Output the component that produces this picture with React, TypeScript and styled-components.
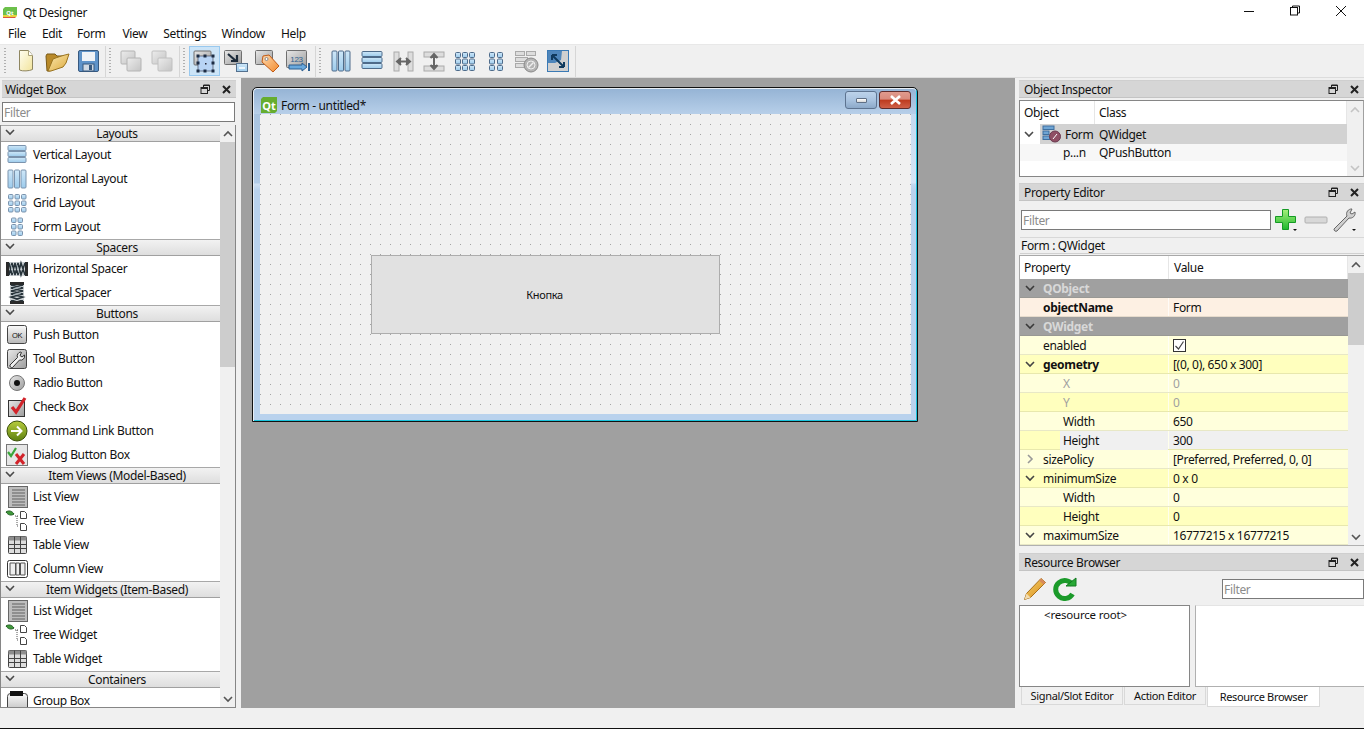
import React from "react";
import styled, { createGlobalStyle } from "styled-components";

const Global = createGlobalStyle`
  html, body { margin: 0; padding: 0; background: #f0f0f0; }
  body { font-family: "Noto Sans", "Liberation Sans", sans-serif; font-size: 12px; color: #111; overflow: hidden; letter-spacing: -0.33px; }
  * { box-sizing: border-box; }
`;

const Page = styled.div`width:1364px;height:729px;display:flex;flex-direction:column;background:#f0f0f0;overflow:hidden;`;
const TitleBar = styled.header`height:22px;background:#fff;display:flex;align-items:center;padding:3px 0 0 3px;`;
const AppName = styled.span`margin-left:6px;font-size:12px;line-height:18px;`;
const QtBadge = styled.span<{ $w: number; $h: number; $stripe?: boolean }>`
  width:${p => p.$w}px;height:${p => p.$h}px;display:flex;align-items:center;justify-content:center;flex:none;
  color:#fff;font-weight:700;font-size:${p => p.$h - 5}px;letter-spacing:0;line-height:1;
  background:${p => p.$stripe ? "linear-gradient(#6cc04a 0 72%, #e8d23c 72% 88%, #d9583c 88%)" : "#66ad2f"};
  clip-path:polygon(2px 0,100% 0,100% calc(100% - 2px),calc(100% - 2px) 100%,0 100%,0 2px);
`;
const WinControls = styled.div`margin:-3px 0 0 auto;align-self:flex-start;display:flex;`;
const WinControl = styled.span`width:46px;height:22px;display:flex;align-items:center;justify-content:center;`;
const MenuBar = styled.nav`height:22px;background:#fff;display:flex;align-items:center;padding-top:2px;`;
const MenuItem = styled.span<{ $x: number }>`margin-left:${p => p.$x}px;line-height:20px;`;
const ToolBar = styled.div`height:34px;background:#f0f0f0;border-top:1px solid #e8e8e8;border-bottom:1px solid #dcdcdc;display:flex;align-items:center;`;
const ToolGroup = styled.div<{ $first?: boolean }>`display:flex;align-items:center;height:31px;padding-right:2px;border-right:1px solid #d6d6d6;padding-left:${p => p.$first ? 4 : 3}px;`;
const Handle = styled.span`width:2px;height:27px;margin-right:4px;background-image:repeating-linear-gradient(#b0b0b0 0 1px,transparent 1px 3px);`;
const ToolButton = styled.span<{ $active?: boolean }>`
  width:31px;height:30px;display:flex;align-items:center;justify-content:center;flex:none;
  ${p => p.$active ? "background:#cce4f7;border:1px solid #99c9ef;" : ""}
`;
const Main = styled.main`height:630px;display:flex;`;
const LeftDock = styled.aside`width:238px;flex:none;display:flex;flex-direction:column;padding-top:2px;`;
const RightDock = styled.aside`width:346px;margin-left:3px;flex:none;display:flex;flex-direction:column;padding-top:2px;`;
const DockTitle = styled.div<{ $left?: boolean }>`
  height:18px;flex:none;background:#d6d6d6;border-top:1px solid #cfcfcf;border-bottom:1px solid #c4c4c4;
  display:flex;align-items:center;padding:2px 4px 0 ${p => p.$left ? 3 : 5}px;margin-left:${p => p.$left ? 2 : 1}px;margin-right:${p => p.$left ? 2 : 0}px;
`;
const DockName = styled.span`flex:1;line-height:14px;`;
const DockIcons = styled.span`display:flex;align-items:center;gap:10px;margin-top:-2px;`;
const Filter = styled.input<{ $w: number; $h: number; $ml: number }>`
  width:${p => p.$w}px;height:${p => p.$h}px;margin-left:${p => p.$ml}px;flex:none;
  border:1px solid #7a7a7a;background:#fff;padding:0 1px;font:inherit;letter-spacing:inherit;color:#111;outline:none;
  &::placeholder{color:#8c8c8c;opacity:1;}
`;
const BoxFilterRow = styled.div`margin-top:4px;height:20px;display:flex;flex:none;`;
const BoxPanel = styled.div`margin-top:3px;height:583px;width:236px;border:1px solid #868686;border-top:0;display:flex;overflow:hidden;`;
const BoxList = styled.div`width:219px;flex:none;background:#fff;overflow:hidden;`;
const BoxHeader = styled.div`
  position:relative;border-top:1px solid #a8a8a8;border-bottom:1px solid #a0a0a0;margin-bottom:1px;padding-left:13px;
  height:17px;background:linear-gradient(#f2f2f2,#dedede);display:flex;align-items:center;justify-content:center;
`;
const BoxHeaderArrow = styled.span`position:absolute;left:4px;top:1px;display:flex;`;
const BoxItem = styled.div`height:24px;display:flex;align-items:center;padding-left:4px;gap:5px;white-space:nowrap;`;
const BoxItemText = styled.span`line-height:12px;margin-left:-1px;`;
const BoxGroup = styled.div``;
const ScrollBar = styled.div`width:16px;flex:none;background:#f0f0f0;display:flex;flex-direction:column;align-items:stretch;`;
const ScrollEnd = styled.span`height:17px;flex:none;display:flex;align-items:center;justify-content:center;`;
const ScrollTrack = styled.span`flex:1;display:block;`;
const ScrollThumb = styled.span<{ $top: number; $h: number }>`display:block;margin-top:${p => p.$top}px;height:${p => p.$h}px;background:#cdcdcd;`;

const Center = styled.section`width:774px;margin-left:3px;flex:none;background:#a0a0a0;position:relative;`;
const FormWindow = styled.div`
  position:absolute;left:11px;top:9px;width:666px;height:335px;display:flex;flex-direction:column;
  border:1px solid #111;border-radius:5px 5px 0 0;
  box-shadow:inset 1px 1px 0 #e8eef5,inset -1px -1px 0 #19c3dc;
  background:linear-gradient(#a6c2df 0,#b1cbe7 95px,#cfe0f3 96px,#b9d2ed 102px) left/50% 100% no-repeat,linear-gradient(#bdd4ec 0,#d6e6f7 95px,#c3d9f0 96px,#b9d2ed 102px) right/50% 100% no-repeat;
  padding:1px 1px 7px 1px;
`;
const FormCaption = styled.div`height:25px;flex:none;display:flex;align-items:center;padding:7px 5px 0 7px;background:linear-gradient(#96b4d5,#b7cfe9);border-radius:4px 4px 0 0;`;
const CaptionText = styled.span`margin-left:4px;flex:1;`;
const CaptionBtn = styled.span<{ $close?: boolean }>`
  width:32px;height:18px;margin-left:2px;margin-top:-10px;display:flex;align-items:center;justify-content:center;border-radius:3px;
  border:1px solid ${p => p.$close ? "#5f2c2c" : "#5d7390"};
  background:${p => p.$close ? "linear-gradient(#e09a8d,#d98a7c 45%,#bd3a1e 50%,#cf6048)" : "linear-gradient(#bcd2ea,#a9c3e0 50%,#8ca9c9)"};
`;
const MinBar = styled.span`width:11px;height:5px;background:linear-gradient(#fff,#d8d8d8);border:1px solid #5f6f85;border-radius:1px;`;
const FormClient = styled.div`
  width:651px;height:300px;margin-left:6px;position:relative;background-color:#f0f0f0;
  background-image:conic-gradient(from 0deg at 1px 1px,transparent 0 75%,#a3a3a3 75% 100%);background-size:10px 10px;
`;
const FormButton = styled.div`position:absolute;left:111px;top:141px;width:349px;height:79px;background:#e1e1e1;border:1px solid #adadad;display:flex;align-items:center;justify-content:center;font-size:11px;padding-right:2px;`;

const Inspector = styled.div`margin-top:2px;margin-left:1px;height:77px;flex:none;border:1px solid #868686;border-right:1px solid #a0a0a0;background:#fff;display:flex;`;
const InspectorBody = styled.div`flex:1;min-width:0;`;
const ColHeads = styled.div<{ $h: number; $first: number }>`height:${p => p.$h}px;display:grid;grid-template-columns:${p => p.$first}px 1fr;background:#fff;`;
const ColHead = styled.div<{ $pad: number }>`padding-left:${p => p.$pad}px;border-right:1px solid #e6e6e6;display:flex;align-items:center;`;
const ObjRow = styled.div<{ $bg: string; $h: number }>`height:${p => p.$h}px;display:grid;grid-template-columns:75px 1fr;background:${p => p.$bg};align-items:center;`;
const ObjName = styled.div<{ $selected?: boolean }>`display:flex;align-items:center;height:100%;position:relative;padding-left:${p => p.$selected ? 4 : 43}px;`;
const ObjNameHi = styled.span`display:flex;align-items:center;gap:3px;padding-left:1px;`;
const ObjClass = styled.div`padding-left:4px;`;
const PropSection = styled.div`margin-top:6px;flex:none;`;
const PropFilterRow = styled.div`margin-top:7px;height:24px;display:flex;align-items:center;`;
const PropBtns = styled.div`display:flex;align-items:center;`;
const PropBtn = styled.span<{ $w: number }>`width:${p => p.$w}px;height:24px;display:flex;align-items:center;justify-content:center;`;
const ClassLine = styled.div`margin:5px 0 0 2px;height:17px;border-top:1px solid #d8d8d8;border-bottom:1px solid #d0d0d0;display:flex;align-items:center;padding-left:1px;`;
const PropPanel = styled.div`margin:1px 0 0 1px;height:291px;border:1px solid #a8a8a8;border-bottom:1px solid #b0b0b0;display:flex;background:#fff;`;
const PropBody = styled.div`width:328px;flex:none;overflow:hidden;`;
const PropRow = styled.div<{ $bg: string }>`height:19px;display:grid;grid-template-columns:149px 1fr;background:${p => p.$bg};border-bottom:1px solid rgba(110,110,90,.16);`;
const PropName = styled.div<{ $depth: number; $bold?: boolean; $muted?: boolean; $light?: boolean }>`
  position:relative;display:flex;align-items:center;white-space:nowrap;
  padding-left:${p => p.$depth === 0 ? 23 : 43}px;font-weight:${p => p.$bold ? 700 : 400};
  color:${p => p.$light ? "#d8d8d8" : p.$muted ? "#a0a0a0" : "#111"};
  ${p => p.$light ? "" : "border-right:1px solid rgba(255,255,255,.7);"}
`;
const HeightFill = styled.span`position:absolute;left:40px;top:0;bottom:-1px;right:0;background:#f0f0f0;`;
const PropLabel = styled.span`position:relative;`;
const PropArrow = styled.span`position:absolute;left:5px;top:4px;display:flex;`;
const PropValue = styled.div<{ $muted?: boolean; $fill?: string }>`padding-left:4px;display:flex;align-items:center;color:${p => p.$muted ? "#a0a0a0" : "#111"};white-space:nowrap;${p => p.$fill ? `background:${p.$fill};` : ""}`;
const Check = styled.span`width:13px;height:13px;border:1px solid #333;background:#fff;display:flex;align-items:center;justify-content:center;`;
const ResSection = styled.div`margin-top:7px;flex:1;display:flex;flex-direction:column;min-height:0;`;
const ResTools = styled.div`height:34px;display:flex;align-items:center;padding:2px 0 0 5px;flex:none;`;
const ResBtn = styled.span`width:24px;height:24px;margin-right:6px;display:flex;align-items:center;justify-content:center;`;
const ResSpace = styled.span`flex:1;`;
const ResTrees = styled.div`height:82px;display:flex;margin-left:1px;flex:none;`;
const ResTree = styled.div`width:171px;border:1px solid #868686;background:#fff;padding:1px 0 0 24px;font-size:11.5px;line-height:15px;letter-spacing:-0.2px;`;
const ResPane = styled.div`margin-left:5px;flex:1;border:1px solid #b0b0b0;border-right:0;border-top-color:#e4e4e4;background:#fff;`;
const Tabs = styled.div`display:flex;margin-left:3px;height:20px;flex:none;`;
const Tab = styled.span<{ $w: number; $active?: boolean }>`
  width:${p => p.$w}px;height:${p => p.$active ? 20 : 18}px;margin-right:${p => p.$active ? 0 : 1}px;display:flex;align-items:center;justify-content:center;font-size:11px;
  background:${p => p.$active ? "#fff" : "#f0f0f0"};border:1px solid #d9d9d9;border-top:0;
`;
const StatusBar = styled.footer`height:20px;background:#f0f0f0;flex:none;`;
const BottomEdge = styled.div`height:1px;background:#111;flex:none;`;
const Defs = styled.svg`display:block;width:0;height:0;`;

const Chevron = ({ dir = "down", color = "#4a4a4a", size = 10 }: { dir?: "up" | "down" | "right"; color?: string; size?: number }) => (
  <svg width={size} height={size} viewBox="0 0 10 10" fill="none" stroke={color} strokeWidth="1.6">
    {dir === "down" && <polyline points="1,3 5,7 9,3" />}
    {dir === "up" && <polyline points="1,7 5,3 9,7" />}
    {dir === "right" && <polyline points="3,1 7,5 3,9" />}
  </svg>
);
const DockBtns = () => (
  <DockIcons>
    <svg width="11" height="11" viewBox="0 0 11 11" fill="none" stroke="#222" strokeWidth="1"><path d="M3.5 3V1h6v5.5H7.5" /><rect x="1" y="3.5" width="6.5" height="6" /><path d="M1 4.5h6.5M3.5 1.5h6" /></svg>
    <svg width="11" height="11" viewBox="0 0 11 11" stroke="#222" strokeWidth="2"><path d="M2 2l7 7M9 2l-7 7" /></svg>
  </DockIcons>
);
const Box = ({ x, y, w, h, r = 1, f = "url(#gGray)", s = "#6f6f6f" }: any) => <rect x={x} y={y} width={w} height={h} rx={r} fill={f} stroke={s} />;

const Hbars = ({ x = 3, w = 18, s = "#7b93ad" }: any) => (<>{[3, 9, 15].map(y => <Box key={y} x={x} y={y - 0.5} w={w} h={5} f="url(#gBlue)" s={s} />)}</>);
const Vbars = ({ y = 3, h = 18, s = "#7b93ad" }: any) => (<>{[3, 9.5, 16].map(x => <Box key={x} x={x} y={y} w={5} h={h} f="url(#gBlue)" s={s} />)}</>);
const Cells = ({ xs, ys, s = "#7b93ad", d = 4.5 }: any) => (<>{xs.map((x: number) => ys.map((y: number) => <Box key={x + "-" + y} x={x} y={y} w={d} h={d} f="url(#gBlue)" s={s} />))}</>);

const W = ({ children }: { children: React.ReactNode }) => <svg width="24" height="24" viewBox="0 0 24 24" style={{ flex: "none" }}>{children}</svg>;
const T = ({ children, s = 26 }: { children: React.ReactNode; s?: number }) => <svg width={s} height={s} viewBox="0 0 26 26">{children}</svg>;

const Spring = () => (<>
  <rect x="1" y="5" width="22" height="14" fill="#8f9aa0" opacity=".45" />
  <rect x="1" y="5" width="3" height="14" fill="#2a2a2a" /><rect x="20" y="5" width="3" height="14" fill="#2a2a2a" />
  <path d="M4 6l3 12 3-12 3 12 3-12 4 12M4 18l3-12 3 12 3-12 3 12 4-12" fill="none" stroke="#27333a" strokeWidth="1.500" />
  <path d="M6 8l2 8M12 8l2 8" stroke="#c8d4da" strokeWidth=".8" />
</>);
const Tree = () => (<>
  <path d="M1 3c3-2 6-1 8 2-3 2-6 1-8-2z" fill="#3f9a3a" stroke="#1e5a20" />
  <path d="M10 7h4M12 7v10h2" stroke="#555" strokeDasharray="1 1" fill="none" />
  <path d="M15.500 2.500h4l2 2v5h-6zM15.500 14.500h4l2 2v5h-6z" fill="#fff" stroke="#444" />
</>);
const TableIc = () => (<>
  <rect x="3.500" y="3.500" width="18" height="17" rx="1" fill="#dedede" stroke="#444" /><rect x="3.500" y="3.500" width="18" height="4" fill="#8e8e8e" />
  <path d="M9.500 3.500v17M15.500 3.500v17M3.500 11.500h18M3.500 15.500h18" stroke="#444" />
</>);
const ListIc = () => (<>
  <rect x="3.500" y="1.500" width="19" height="21" fill="#bdbdbd" stroke="#666" />
  {[5, 8, 11, 14, 17, 20].map(y => <path key={y} d={`M7 ${y}h13`} stroke="#7c7c7c" strokeWidth="1.400" />)}
</>);

const icons: Record<string, React.ReactNode> = {
  "Vertical Layout": <W><Hbars /></W>,
  "Horizontal Layout": <W><Vbars /></W>,
  "Grid Layout": <W><Cells xs={[3.5, 10, 16.500]} ys={[3.5, 10, 16.500]} /></W>,
  "Form Layout": <W><Cells xs={[6.5, 13]} ys={[3, 9.5, 16]} /></W>,
  "Horizontal Spacer": <W><Spring /></W>,
  "Vertical Spacer": <W><g transform="rotate(90 12 12)"><Spring /></g></W>,
  "Push Button": <W><rect x="2.500" y="2.500" width="19" height="18" rx="2" fill="url(#gGray2)" stroke="#444" /><text x="12" y="14.500" textAnchor="middle" fontSize="7.500" fontFamily="Liberation Sans" fill="#111">OK</text></W>,
  "Tool Button": <W><rect x="2.500" y="2.500" width="19" height="19" rx="2" fill="url(#gGray)" stroke="#444" /><path d="M16 5a4 4 0 0 0-3.500 5.500L5 18a2 2 0 0 0 2.500 2.500l7-7.500A4 4 0 0 0 19.500 8l-2.500 2-2-1.500 1.500-3z" fill="#f0f0f0" stroke="#333" /></W>,
  "Radio Button": <W><circle cx="12" cy="12" r="7.500" fill="url(#gGray)" stroke="#777" /><circle cx="12" cy="12" r="3" fill="#111" /></W>,
  "Check Box": <W><rect x="3.500" y="5.500" width="16" height="16" fill="url(#gGray)" stroke="#333" /><path d="M7 12l4 5 9-14" fill="none" stroke="#d2232a" strokeWidth="3.200" /></W>,
  "Command Link Button": <W><circle cx="12" cy="12" r="10" fill="url(#gLime)" stroke="#3d5208" /><path d="M6 12h10M12 7.500l4.500 4.500-4.500 4.500" fill="none" stroke="#fff" strokeWidth="2" /></W>,
  "Dialog Button Box": <W><rect x="1.500" y="1.500" width="21" height="21" fill="#e6e6e6" stroke="#777" /><path d="M3 9l3 4 5-8" fill="none" stroke="#3aa53a" strokeWidth="2.200" /><path d="M11 11l8 10M19 11l-8 10" stroke="#d2232a" strokeWidth="3" /></W>,
  "List View": <W><ListIc /></W>,
  "Tree View": <W><Tree /></W>,
  "Table View": <W><TableIc /></W>,
  "Column View": <W><rect x="2.500" y="3.500" width="20" height="17" rx="2" fill="#fff" stroke="#333" /><path d="M5 6h5.500v12H5zM11 6h3.500v12H11zM15.500 6H20v12h-4.500z" fill="#eee" stroke="#555" /></W>,
  "List Widget": <W><ListIc /></W>,
  "Tree Widget": <W><Tree /></W>,
  "Table Widget": <W><TableIc /></W>,
  "Group Box": <W><rect x="2.500" y="4.500" width="20" height="20" rx="3" fill="url(#gGray2)" stroke="#444" /><rect x="5" y="2" width="13" height="5" fill="#111" /></W>,
};

const groups: [string, string[]][] = [
  ["Layouts", ["Vertical Layout", "Horizontal Layout", "Grid Layout", "Form Layout"]],
  ["Spacers", ["Horizontal Spacer", "Vertical Spacer"]],
  ["Buttons", ["Push Button", "Tool Button", "Radio Button", "Check Box", "Command Link Button", "Dialog Button Box"]],
  ["Item Views (Model-Based)", ["List View", "Tree View", "Table View", "Column View"]],
  ["Item Widgets (Item-Based)", ["List Widget", "Tree Widget", "Table Widget"]],
  ["Containers", ["Group Box"]],
];

const Dup = ({ a = "#b4b4b4" }: any) => <T><Box x={3} y={3} w={14} h={13} f="url(#gGrayL)" s={a} /><Box x={9} y={10} w={14} h={13} f="url(#gGrayL)" s={a} /></T>;
const SelDots = () => (<>{[[6, 8], [13, 8], [21, 8], [6, 15], [21, 15], [6, 23], [13, 23], [21, 23]].map(([x, y]) => <rect key={x + "" + y} x={x - 1.5} y={y - 1.5} width="3" height="3" fill="#1c2c44" />)}</>);

const toolbar: { n: string; active?: boolean; ic: React.ReactNode }[][] = [
  [
    { n: "new", ic: <T><path d="M6.500 2.500h9l4 5v14c-3 1.500-10 2-13 .5z" fill="url(#gPage)" stroke="#8f8660" /><path d="M15.500 2.500v5h4" fill="#fff" stroke="#aaa27a" /></T> },
    { n: "open", ic: <T><path d="M2 8l1-2h8l2 2h7l1 3v3L6 23H3z" fill="#b98a2a" stroke="#7a5a18" /><path d="M4 23L9 11c5-2 11-4 16-5l-3 9-3 4-12 4z" fill="url(#gFolder)" stroke="#9a7420" /></T> },
    { n: "save", ic: <T><rect x="3.500" y="2.500" width="20" height="21" rx="1.500" fill="#5f93c9" stroke="#37597f" /><rect x="7" y="4" width="13" height="9" fill="#eef2f7" /><rect x="8" y="16" width="11" height="7" fill="#cfd9e4" stroke="#37597f" /><rect x="14" y="17" width="3" height="5" fill="#37597f" /></T> },
  ],
  [{ n: "copy1", ic: <Dup /> }, { n: "copy2", ic: <Dup a="#c0c0c0" /> }],
  [
    { n: "edit", active: true, ic: <T><Box x={2} y={3} w={17} h={14} /><rect x="6" y="8" width="15" height="15" fill="#b8d4f5" stroke="#334" strokeWidth=".6" /><SelDots /><rect x="13" y="15" width="1.500" height="1.500" fill="#223" /></T> },
    { n: "signal", ic: <T><Box x={1.5} y={2.5} w={17} h={14} /><path d="M5 6l8 7M8 13h6V7" fill="none" stroke="#1d2b3a" strokeWidth="2.200" /><rect x="13.500" y="15.500" width="11" height="8" fill="url(#gBlue)" stroke="#54708e" /><path d="M16 20h6" stroke="#fff" strokeWidth="1.500" /></T> },
    { n: "buddy", ic: <T><Box x={1.5} y={2.5} w={17} h={14} /><path d="M9 8l6-1 10 11-6 6L8 14z" fill="url(#gTag)" stroke="#c25a14" /><circle cx="12.500" cy="11" r="1.500" fill="#fff" stroke="#888" /></T> },
    { n: "tab", ic: <T><Box x={1.5} y={2.5} w={20} h={17} /><text x="11.500" y="13.500" textAnchor="middle" fontSize="8" fontFamily="Liberation Sans" fill="#2f5f90">123</text><path d="M4 17h13v-2l5 4-5 4v-2H4z" fill="#69a9dd" stroke="#2d5f90" /><rect x="23" y="15" width="2" height="8" fill="#2d5f90" /></T> },
  ],
  [
    { n: "hl", ic: <T><g transform="translate(1 1)"><Vbars y={2} h={20} s="#4e6b8a" /></g></T> },
    { n: "vl", ic: <T><g transform="translate(1 1)"><Hbars x={2} w={20} s="#4e6b8a" /></g></T> },
    { n: "hs", ic: <T><rect x="4" y="4" width="5" height="19" fill="#ddd" stroke="#aaa" /><rect x="18" y="4" width="5" height="19" fill="#ddd" stroke="#aaa" /><path d="M7 13.500h13M11 10l-4 3.500 4 3.500M16 10l4 3.500-4 3.500" fill="#666" stroke="#666" strokeWidth="2" /></T> },
    { n: "vs", ic: <T><rect x="3" y="4" width="20" height="5" fill="#ddd" stroke="#aaa" /><rect x="3" y="18" width="20" height="5" fill="#ddd" stroke="#aaa" /><path d="M13 6v15M9.500 10l3.500-4 3.500 4M9.500 17l3.500 4 3.500-4" fill="#666" stroke="#666" strokeWidth="2" /></T> },
    { n: "grid", ic: <T><Cells xs={[3.5, 10.5, 17.5]} ys={[4.5, 11, 17.5]} s="#4e6b8a" d={5} /></T> },
    { n: "form", ic: <T><Cells xs={[6.5, 14.5]} ys={[4.5, 11, 17.5]} s="#4e6b8a" d={5} /></T> },
    { n: "break", ic: <T><rect x="1.500" y="3.500" width="9" height="4" fill="#ddd" stroke="#aaa" /><rect x="12.500" y="3.500" width="9" height="4" fill="#ddd" stroke="#aaa" /><rect x="1.500" y="9.500" width="12" height="4" fill="#ddd" stroke="#aaa" /><rect x="1.500" y="15.500" width="9" height="4" fill="#ddd" stroke="#aaa" /><circle cx="17" cy="17" r="7" fill="#b4b4b4" stroke="#8a8a8a" /><circle cx="17" cy="17" r="4" fill="none" stroke="#eee" /><path d="M14.500 19.500l5-5" stroke="#eee" strokeWidth="1.500" /></T> },
    { n: "adjust", ic: <T><rect x="2.500" y="2.500" width="21" height="21" fill="#d0d0d0" stroke="#3b7ab5" /><path d="M3 3h14l-1 9-6 3H3z" fill="#4f86bb" /><path d="M7 7l12 12M7 7h5M7 7v5M19 19h-5M19 19v-5" fill="none" stroke="#103a5e" strokeWidth="2" /></T> },
  ],
];

const C = { dc: "#ffffdc", be: "#ffffbe", head: "#a0a0a0", obj: "#fdf0e3" };
type P = { n: string; v?: React.ReactNode; d?: number; bold?: boolean; muted?: boolean; head?: boolean; arrow?: "down" | "right"; bg: string; hl?: boolean };
const props: P[] = [
  { n: "QObject", head: true, arrow: "down", bg: C.head },
  { n: "objectName", v: "Form", bold: true, bg: C.obj },
  { n: "QWidget", head: true, arrow: "down", bg: C.head },
  { n: "enabled", v: <Check><svg width="11" height="11" viewBox="0 0 11 11" fill="none" stroke="#444" strokeWidth="1.200"><path d="M1.500 6l3 3 5-7.500" /></svg></Check>, bg: C.dc },
  { n: "geometry", v: "[(0, 0), 650 x 300]", bold: true, arrow: "down", bg: C.be },
  { n: "X", v: "0", d: 1, muted: true, bg: C.dc },
  { n: "Y", v: "0", d: 1, muted: true, bg: C.be },
  { n: "Width", v: "650", d: 1, bg: C.dc },
  { n: "Height", v: "300", d: 1, bg: C.be, hl: true },
  { n: "sizePolicy", v: "[Preferred, Preferred, 0, 0]", arrow: "right", bg: C.dc },
  { n: "minimumSize", v: "0 x 0", arrow: "down", bg: C.be },
  { n: "Width", v: "0", d: 1, bg: C.dc },
  { n: "Height", v: "0", d: 1, bg: C.be },
  { n: "maximumSize", v: "16777215 x 16777215", arrow: "down", bg: C.dc },
];

const Scroll = ({ top, h, endColor = "#555" }: { top?: number; h?: number; endColor?: string }) => (
  <ScrollBar>
    <ScrollEnd><Chevron dir="up" color={endColor} /></ScrollEnd>
    <ScrollTrack>{h ? <ScrollThumb $top={top ?? 0} $h={h} /> : null}</ScrollTrack>
    <ScrollEnd><Chevron dir="down" color={endColor} /></ScrollEnd>
  </ScrollBar>
);

const menu: [string, number][] = [["File", 8], ["Edit", 16], ["Form", 15], ["View", 17], ["Settings", 16], ["Window", 15], ["Help", 16]];

export default function App() {
  return (
    <Page>
      <Global />
      <Defs>
        <defs>
          <linearGradient id="gGray" x1="0" y1="0" x2="1" y2="1"><stop offset="0" stopColor="#e8e8e8" /><stop offset="1" stopColor="#9c9c9c" /></linearGradient>
          <linearGradient id="gGrayL" x1="0" y1="0" x2="1" y2="1"><stop offset="0" stopColor="#ececec" /><stop offset="1" stopColor="#c4c4c4" /></linearGradient>
          <linearGradient id="gGray2" x1="0" y1="0" x2="0" y2="1"><stop offset="0" stopColor="#fafafa" /><stop offset="1" stopColor="#b8b8b8" /></linearGradient>
          <linearGradient id="gBlue" x1="0" y1="0" x2="0" y2="1"><stop offset="0" stopColor="#cfe7f8" /><stop offset="1" stopColor="#9ccbec" /></linearGradient>
          <linearGradient id="gLime" x1="0" y1="0" x2="0" y2="1"><stop offset="0" stopColor="#b6cc3c" /><stop offset="1" stopColor="#5e8012" /></linearGradient>
          <linearGradient id="gPage" x1="0" y1="0" x2="1" y2="1"><stop offset="0" stopColor="#fffef0" /><stop offset="1" stopColor="#f2e49c" /></linearGradient>
          <linearGradient id="gFolder" x1="0" y1="0" x2="1" y2="1"><stop offset="0" stopColor="#fbe9b0" /><stop offset="1" stopColor="#dca93c" /></linearGradient>
          <linearGradient id="gTag" x1="0" y1="0" x2="1" y2="1"><stop offset="0" stopColor="#fdd9b0" /><stop offset="1" stopColor="#f28a2c" /></linearGradient>
          <linearGradient id="gPlus" x1="0" y1="0" x2="0" y2="1"><stop offset="0" stopColor="#a6f07a" /><stop offset="1" stopColor="#1eb82e" /></linearGradient>
          <linearGradient id="gPencil" x1="0" y1="0" x2="1" y2="1"><stop offset="0" stopColor="#f5d36a" /><stop offset="1" stopColor="#d98a1c" /></linearGradient>
        </defs>
      </Defs>
      <TitleBar>
        <QtBadge $w={14} $h={11} $stripe>Qt</QtBadge>
        <AppName>Qt Designer</AppName>
        <WinControls>
          <WinControl><svg width="12" height="12" viewBox="0 0 12 12" stroke="#111"><path d="M1 6.500h10" /></svg></WinControl>
          <WinControl><svg width="12" height="12" viewBox="0 0 12 12" fill="none" stroke="#111"><path d="M3.500 2.500v-1.500h7v7h-2" /><rect x="1.500" y="2.500" width="7" height="7.500" /></svg></WinControl>
          <WinControl><svg width="12" height="12" viewBox="0 0 12 12" stroke="#111"><path d="M1 1l10 10M11 1L1 11" /></svg></WinControl>
        </WinControls>
      </TitleBar>
      <MenuBar>{menu.map(([m, x]) => <MenuItem key={m} $x={x}>{m}</MenuItem>)}</MenuBar>
      <ToolBar>
        {toolbar.map((g, i) => (
          <ToolGroup key={i} $first={i === 0}>
            <Handle />
            {g.map(b => <ToolButton key={b.n} $active={b.active}>{b.ic}</ToolButton>)}
          </ToolGroup>
        ))}
      </ToolBar>
      <Main>
        <LeftDock>
          <DockTitle $left><DockName>Widget Box</DockName><DockBtns /></DockTitle>
          <BoxFilterRow><Filter readOnly placeholder="Filter" $w={233} $h={20} $ml={2} /></BoxFilterRow>
          <BoxPanel>
            <BoxList>
              {groups.map(([g, items]) => (
                <BoxGroup key={g}>
                  <BoxHeader><BoxHeaderArrow><Chevron /></BoxHeaderArrow>{g}</BoxHeader>
                  {items.map(i => <BoxItem key={i}>{icons[i]}<BoxItemText>{i}</BoxItemText></BoxItem>)}
                </BoxGroup>
              ))}
            </BoxList>
            <Scroll h={225} />
          </BoxPanel>
        </LeftDock>
        <Center>
          <FormWindow>
            <FormCaption>
              <QtBadge $w={16} $h={16}>Qt</QtBadge>
              <CaptionText>Form - untitled*</CaptionText>
              <CaptionBtn><MinBar /></CaptionBtn>
              <CaptionBtn $close><svg width="13" height="10" viewBox="0 0 13 10" stroke="#fff" strokeWidth="2.600"><path d="M2 1l9 8M11 1L2 9" /></svg></CaptionBtn>
            </FormCaption>
            <FormClient><FormButton>Кнопка</FormButton></FormClient>
          </FormWindow>
        </Center>
        <RightDock>
          <DockTitle><DockName>Object Inspector</DockName><DockBtns /></DockTitle>
          <Inspector>
            <InspectorBody>
              <ColHeads $h={23} $first={75}><ColHead $pad={4}>Object</ColHead><ColHead $pad={4}>Class</ColHead></ColHeads>
              <ObjRow $bg="linear-gradient(90deg,#fff 20px,#d2d2d2 20px)" $h={20}>
                <ObjName $selected>
                  <Chevron />
                  <ObjNameHi>
                    <svg width="20" height="20" viewBox="0 0 20 20" style={{ marginLeft: 7 }}><rect x="1" y="2" width="11" height="3.500" fill="#6fa5d4" stroke="#3f6f9f" /><rect x="1" y="7" width="6" height="3.500" fill="#6fa5d4" stroke="#3f6f9f" /><rect x="1" y="12" width="7" height="3.500" fill="#6fa5d4" stroke="#3f6f9f" /><circle cx="13" cy="12.500" r="5.500" fill="#8f4f64" stroke="#6b3a50" /><path d="M11 15l4-5" stroke="#fff" /></svg>
                    Form
                  </ObjNameHi>
                </ObjName>
                <ObjClass>QWidget</ObjClass>
              </ObjRow>
              <ObjRow $bg="#f7f7f7" $h={17}><ObjName>p...n</ObjName><ObjClass>QPushButton</ObjClass></ObjRow>
            </InspectorBody>
            <Scroll endColor="#c4c4c4" />
          </Inspector>
          <PropSection>
            <DockTitle><DockName>Property Editor</DockName><DockBtns /></DockTitle>
            <PropFilterRow>
              <Filter readOnly placeholder="Filter" $w={250} $h={20} $ml={3} />
              <PropBtns>
                <PropBtn $w={30}><svg width="24" height="24" viewBox="0 0 24 24"><path d="M8.500 1.500h6v7h7v6h-7v7h-6v-7h-7v-6h7z" fill="url(#gPlus)" stroke="#159a25" /><path d="M19 21l4 0-2 2z" fill="#111" /></svg></PropBtn>
                <PropBtn $w={30}><svg width="24" height="24" viewBox="0 0 24 24"><rect x="1" y="9" width="22" height="6" rx="1" fill="#d8d8d8" stroke="#b0b0b0" /></svg></PropBtn>
                <PropBtn $w={26}><svg width="26" height="24" viewBox="0 0 26 24"><path d="M21 1a5 5 0 0 0-5 7L3 21a2 2 0 0 0 3 2L18 10a5 5 0 0 0 6-6l-3 2-2-1 2-4z" fill="#cfcfcf" stroke="#666" /><path d="M21 21l4 0-2 2z" fill="#111" /></svg></PropBtn>
              </PropBtns>
            </PropFilterRow>
            <ClassLine>Form : QWidget</ClassLine>
            <PropPanel>
              <PropBody>
                <ColHeads $h={23} $first={149}><ColHead $pad={4}>Property</ColHead><ColHead $pad={5}>Value</ColHead></ColHeads>
                {props.map((p, i) => (
                  <PropRow key={i} $bg={p.bg}>
                    <PropName $depth={p.d ?? 0} $bold={p.bold || p.head} $muted={p.muted} $light={p.head}>
                      {p.hl && <HeightFill />}
                      {p.arrow && <PropArrow><Chevron dir={p.arrow} color={p.arrow === "right" ? "#999" : p.head ? "#3a3a3a" : "#444"} /></PropArrow>}
                      <PropLabel>{p.n}</PropLabel>
                    </PropName>
                    <PropValue $muted={p.muted} $fill={p.hl ? "#f0f0f0" : undefined}>{p.v}</PropValue>
                  </PropRow>
                ))}
              </PropBody>
              <Scroll top={0} h={72} />
            </PropPanel>
          </PropSection>
          <ResSection>
            <DockTitle><DockName>Resource Browser</DockName><DockBtns /></DockTitle>
            <ResTools>
              <ResBtn><svg width="24" height="24" viewBox="0 0 24 24"><path d="M18 1.500l4.500 4-15 15-6 2 2-6z" fill="url(#gPencil)" stroke="#a8701c" /><path d="M18 1.500l4.500 4-2 2-4.500-4z" fill="#d88a5c" /><path d="M1.500 22.500l2-6 4 4z" fill="#f2dcb0" /></svg></ResBtn>
              <ResBtn><svg width="24" height="24" viewBox="0 0 24 24"><path d="M19.500 8a9 9 0 1 0 0 9" fill="none" stroke="#1b9a2a" strokeWidth="5" /><path d="M13 9h10V1z" fill="#27a834" stroke="#127a20" /></svg></ResBtn>
              <ResSpace />
              <Filter readOnly placeholder="Filter" $w={142} $h={20} $ml={0} />
            </ResTools>
            <ResTrees>
              <ResTree>&lt;resource root&gt;</ResTree>
              <ResPane />
            </ResTrees>
            <Tabs>
              <Tab $w={102}>Signal/Slot Editor</Tab>
              <Tab $w={82}>Action Editor</Tab>
              <Tab $w={113} $active>Resource Browser</Tab>
            </Tabs>
          </ResSection>
        </RightDock>
      </Main>
      <StatusBar />
      <BottomEdge />
    </Page>
  );
}
